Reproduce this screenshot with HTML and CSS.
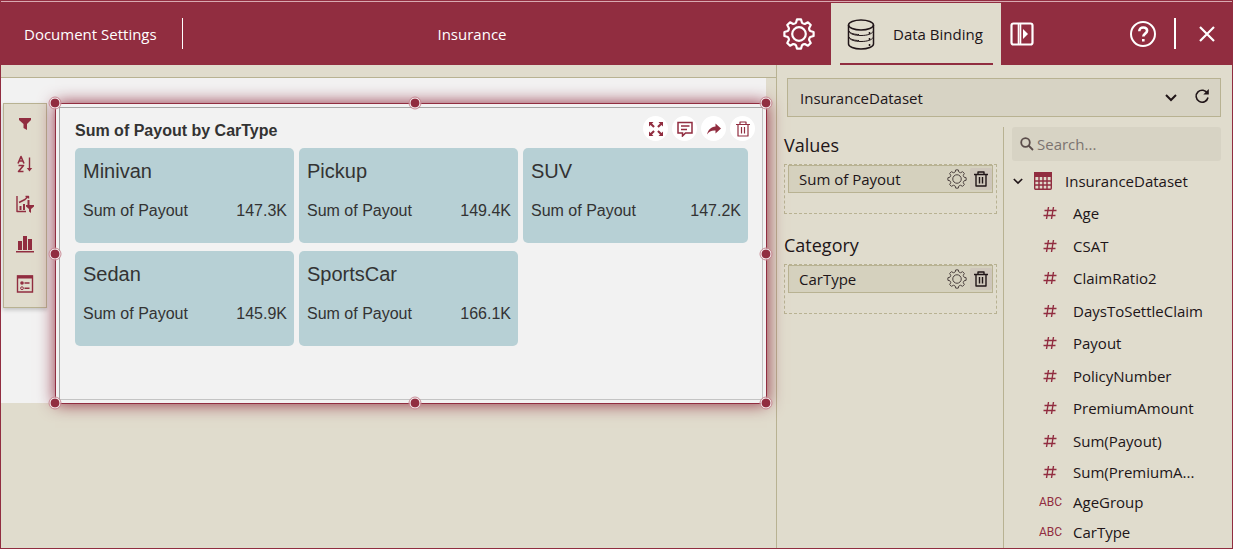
FILE: index.html
```html
<!DOCTYPE html>
<html lang="en">
<head>
<meta charset="utf-8">
<title>Insurance</title>
<link rel="stylesheet" href="styles.css">
</head>
<body>
<svg class="sprite" aria-hidden="true">
  <symbol id="gear" viewBox="-16 -16 32 32">
    <path d="M-3-11.2-2-14.6H2L3-11.2Q4.2-10 5.8-10.04L8.91-11.74 11.74-8.91 10.04-5.8Q10-4.2 11.2-3L14.6-2V2L11.2 3Q10 4.2 10.04 5.8L11.74 8.91 8.91 11.74 5.8 10.04Q4.2 10 3 11.2L2 14.6H-2L-3 11.2Q-4.2 10-5.8 10.04L-8.91 11.74-11.74 8.91-10.04 5.8Q-10 4.2-11.2 3L-14.6 2V-2L-11.2-3Q-10-4.2-10.04-5.8L-11.74-8.91-8.91-11.74-5.8-10.04Q-4.2-10-3-11.2Z"/>
    <circle r="6.8"/>
  </symbol>
  <symbol id="trash" viewBox="0 0 16 16">
    <path d="M1 3.5h14M5 3.500V1h6v2.500M3 3.500V15h10V3.500M6.500 6v6.500M9.500 6v6.500"/>
  </symbol>
  <symbol id="hash" viewBox="0 0 14 14">
    <path d="M5.500 1 3.500 13M10.500 1 8.500 13M1.500 4.500h12M.5 9.500h12"/>
  </symbol>
</svg>
<div class="app">
  <header class="topbar">
    <button class="doc-settings">Document Settings</button>
    <h1 class="doc-title">Insurance</h1>
    <button class="icon-btn properties" aria-label="Properties"><svg class="line i32" stroke-width="2.2"><use href="#gear"/></svg></button>
    <button class="tab">
      <svg class="line" width="28" height="31" viewBox="0 0 28 31" stroke-width="1.5">
        <ellipse cx="14" cy="6" rx="12.500" ry="5"/>
        <path d="M1.500 6v19c0 2.800 5.600 5 12.500 5s12.500-2.200 12.500-5V6"/>
        <path stroke-width="1" d="M2 12.500c1 2.500 6 4 12 4s11-1.500 12-4M2 18.500c1 2.500 6 4 12 4s11-1.500 12-4M2 12c1 2.500 6 3.500 10 3.500M2 18c1 2.500 6 3.500 10 3.500"/>
        <path d="M22.500 13v2M22.500 19v2M22.500 25v2"/>
      </svg>
      <span>Data Binding</span>
    </button>
    <button class="icon-btn collapse" aria-label="Toggle panel">
      <svg width="24" height="24" viewBox="0 0 24 24" fill="none" stroke="currentColor"><rect x="1.500" y="1.500" width="21" height="21" rx="2" stroke-width="2.200"/><path stroke-width="1.600" d="M8.500 2v20M10.500 2v20"/><path fill="currentColor" stroke="none" d="M13 7v10l5-5z"/></svg>
    </button>
    <button class="icon-btn help" aria-label="Help">
      <svg class="line" width="26" height="26" viewBox="0 0 26 26" stroke-width="2"><circle cx="13" cy="13" r="12"/><path stroke-width="2.600" d="M9.300 10.200C9.300 7.800 11 6.500 13.200 6.500s3.900 1.300 3.900 3.300c0 2.800-3.800 2.900-3.800 5.700M13.300 18v2.500"/></svg>
    </button>
    <button class="icon-btn close" aria-label="Close">
      <svg width="16" height="16" viewBox="0 0 16 16" fill="none" stroke="currentColor" stroke-width="2.200"><path d="M1 1l14 14M15 1 1 15"/></svg>
    </button>
  </header>

  <div class="workspace">
    <main class="canvas">
      <div class="ruler"></div>
      <div class="sheet">
        <div class="side-tools" role="toolbar" aria-label="Widget tools">
          <button aria-label="Filter"><svg class="i18" viewBox="0 0 18 18"><path fill="currentColor" d="M3 3h12v2l-4 4v6l-3.500-2V9L3 5z"/></svg></button>
          <button aria-label="Sort"><svg class="i18 line" viewBox="0 0 18 18" stroke-width="1.600"><path d="M2 8.500 5 1.500l3 7M3 6h4M2.500 10.500h5L2.500 16.500h5"/><path stroke-width="1.400" d="M13.500 2.500v12"/><path fill="currentColor" stroke="none" d="M10.800 13h5.400l-2.700 3.500z"/></svg></button>
          <button aria-label="Rank"><svg class="i18 line" viewBox="0 0 18 18" stroke-width="1.400"><path d="M1 1v15.500h9M3 7.500l4-2 2-1 3-3M9.500 1.500h3v2"/><path stroke-width="2" d="M4.500 11v4M8 9v6M12.500 5v5"/><path fill="currentColor" stroke="none" d="M10 10h8v1.500l-3 2.500v4l-2-1.500V14l-3-2.500z"/></svg></button>
          <button aria-label="Chart type"><svg class="i18" viewBox="0 0 18 18" fill="currentColor"><path d="M2 6h4v9H2zM7 1h4v14H7zM12 4h4v11h-4zM0 16h18v1.500H0z"/></svg></button>
          <button aria-label="Legend"><svg class="i18" viewBox="0 0 18 18"><path fill="none" stroke="currentColor" stroke-width="1.400" d="M1.500 1h15v16h-15z"/><path fill="currentColor" d="M1 .5h16v3H1zM8.500 7.200h5v1.500h-5zM8.500 12.500h5V14h-5z"/><circle cx="6" cy="8" r="1.800" fill="currentColor"/><circle cx="6" cy="13.200" r="1.400" fill="none" stroke="currentColor"/></svg></button>
        </div>
        <section class="widget">
          <i class="grip top start"></i><i class="grip top mid"></i><i class="grip top end"></i>
          <i class="grip center start"></i><i class="grip center end"></i>
          <i class="grip bottom start"></i><i class="grip bottom mid"></i><i class="grip bottom end"></i>
          <div class="widget-body">
            <div class="widget-head">
              <h2>Sum of Payout by CarType</h2>
              <div class="actions">
                <button aria-label="Maximize"><svg class="i16" viewBox="0 0 16 16" fill="currentColor"><path d="M1 1h4.500L4 2.500l2.800 2.800L5.300 6.800 2.500 4 1 5.500zM15 1v4.500L13.500 4l-2.800 2.800-1.500-1.500L12 2.500 10.500 1zM1 15v-4.500L2.500 12l2.800-2.800 1.500 1.500L4 13.500 5.500 15zM15 15h-4.500l1.500-1.500-2.800-2.800 1.500-1.500 2.800 2.800 1.500-1.500z"/></svg></button>
                <button aria-label="Comments"><svg class="i16" viewBox="0 0 16 16" fill="none" stroke="currentColor" stroke-width="1.500"><path d="M1 1.500h14v10.500H8.500l-3 3V12H1zM4 5h8.500M4 8.500h6"/></svg></button>
                <button aria-label="Share"><svg class="i16" viewBox="0 0 16 16"><path fill="currentColor" d="M9.500 2.500 15 7.500l-5.500 5V9.500C5.500 9.200 3 10.500 1 13.500 2 9 5 6 9.500 5.500z"/></svg></button>
                <button aria-label="Delete"><svg class="i16 line" stroke-width="1.200"><use href="#trash"/></svg></button>
              </div>
            </div>
            <div class="tiles">
              <article class="tile"><h3>Minivan</h3><p><span>Sum of Payout</span><span>147.3K</span></p></article>
              <article class="tile"><h3>Pickup</h3><p><span>Sum of Payout</span><span>149.4K</span></p></article>
              <article class="tile"><h3>SUV</h3><p><span>Sum of Payout</span><span>147.2K</span></p></article>
              <article class="tile"><h3>Sedan</h3><p><span>Sum of Payout</span><span>145.9K</span></p></article>
              <article class="tile"><h3>SportsCar</h3><p><span>Sum of Payout</span><span>166.1K</span></p></article>
            </div>
          </div>
        </section>
      </div>
    </main>

    <aside class="panel">
      <div class="dataset-box">
        <select aria-label="Dataset"><option>InsuranceDataset</option></select>
        <svg class="chev" width="12" height="8" viewBox="0 0 12 8"><path d="M1 1l5 5 5-5"/></svg>
        <button aria-label="Refresh"><svg class="i16" viewBox="0 0 16 16"><path fill="none" stroke="currentColor" stroke-width="1.600" d="M13.500 5.500A6 6 0 1 0 14 9.500"/><path fill="currentColor" d="M14.800 1v5.500H9.300z"/></svg></button>
      </div>
      <div class="binding">
        <div class="slots">
          <section class="slot">
            <h2>Values</h2>
            <div class="zone">
              <div class="chip"><span>Sum of Payout</span>
                <button aria-label="Field settings"><svg class="line i20" stroke-width="1.600"><use href="#gear"/></svg></button>
                <button class="remove" aria-label="Remove field"><svg class="line i16" stroke-width="1.400"><use href="#trash"/></svg></button>
              </div>
            </div>
          </section>
          <section class="slot">
            <h2>Category</h2>
            <div class="zone">
              <div class="chip"><span>CarType</span>
                <button aria-label="Field settings"><svg class="line i20" stroke-width="1.600"><use href="#gear"/></svg></button>
                <button class="remove" aria-label="Remove field"><svg class="line i16" stroke-width="1.400"><use href="#trash"/></svg></button>
              </div>
            </div>
          </section>
        </div>
        <div class="fields">
          <label class="search">
            <svg width="14" height="14" viewBox="0 0 14 14" fill="none" stroke="currentColor" stroke-width="1.800"><circle cx="5.500" cy="5.500" r="4.300"/><path d="M8.500 8.500 13 13"/></svg>
            <input type="text" placeholder="Search..." aria-label="Search fields">
          </label>
          <button class="dataset-row">
            <svg class="chev" width="10" height="7" viewBox="0 0 12 8"><path d="M1 1l5 5 5-5"/></svg>
            <svg class="table-icon" width="18" height="18" viewBox="0 0 18 18"><rect x="0.700" y="0.700" width="16.600" height="16.600" rx="1" fill="none" stroke="currentColor" stroke-width="1.400"/><path fill="currentColor" d="M0 0h18v5H0z"/><path fill="none" stroke="currentColor" stroke-width="1.400" d="M1 9h16M1 13h16M5 5v12M9 5v12M13 5v12"/></svg>
            <span>InsuranceDataset</span>
          </button>
          <ul class="field-list">
            <li><svg class="hash"><use href="#hash"/></svg><span>Age</span></li>
            <li><svg class="hash"><use href="#hash"/></svg><span>CSAT</span></li>
            <li><svg class="hash"><use href="#hash"/></svg><span>ClaimRatio2</span></li>
            <li><svg class="hash"><use href="#hash"/></svg><span>DaysToSettleClaim</span></li>
            <li><svg class="hash"><use href="#hash"/></svg><span>Payout</span></li>
            <li><svg class="hash"><use href="#hash"/></svg><span>PolicyNumber</span></li>
            <li><svg class="hash"><use href="#hash"/></svg><span>PremiumAmount</span></li>
            <li><svg class="hash"><use href="#hash"/></svg><span>Sum(Payout)</span></li>
            <li><svg class="hash"><use href="#hash"/></svg><span>Sum(PremiumA...</span></li>
            <li><b class="abc">ABC</b><span>AgeGroup</span></li>
            <li><b class="abc">ABC</b><span>CarType</span></li>
          </ul>
        </div>
      </div>
    </aside>
  </div>
</div>
</body>
</html>
```

FILE: styles.css
```css
:root {
  --brand: #912d40;
  --sand: #e0dccd;
  --sand-dark: #d7d3c4;
  --line: #b8b292;
  --ink: #201518;
}
* { box-sizing: border-box; }
body {
  margin: 0;
  font: 15px/20px "Open Sans", sans-serif;
  color: var(--ink);
  background: var(--sand);
}
h1, h2, h3, p, ul { margin: 0; padding: 0; font-weight: 400; }
button, select, input {
  font: inherit;
  color: inherit;
  background: none;
  border: 0;
  margin: 0;
  padding: 0;
}
svg { flex: none; display: block; }
.sprite { position: absolute; width: 0; height: 0; }
.line { fill: none; stroke: currentColor; stroke-linejoin: round; }
.i16 { width: 16px; height: 16px; }
.i18 { width: 18px; height: 18px; }
.i20 { width: 20px; height: 20px; }
.i32 { width: 32px; height: 32px; }
.chev { fill: none; stroke: var(--ink); stroke-width: 2; }

.app {
  min-height: 100vh;
  display: flex;
  flex-direction: column;
  border: 1px solid var(--brand);
}

/* Top bar */
.topbar {
  display: flex;
  align-items: center;
  height: 64px;
  color: #fff;
  background: var(--brand);
  border-top: 1px solid #d9a9b1;
}
.doc-settings {
  width: 182px;
  height: 31px;
  padding-left: 23px;
  text-align: left;
  border-right: 1px solid #fff;
}
.doc-title { flex: 1; padding-right: 6px; text-align: center; font-size: 15px; }
.icon-btn { display: flex; align-items: center; justify-content: center; height: 31px; }
.properties { width: 64px; }
.tab {
  position: relative;
  align-self: stretch;
  display: flex;
  align-items: center;
  gap: 18px;
  width: 170px;
  margin-top: 1px;
  padding-left: 16px;
  color: var(--ink);
  background: var(--sand);
}
.tab::after {
  content: "";
  position: absolute;
  left: 9px;
  right: 8px;
  bottom: 0;
  height: 2px;
  background: var(--brand);
}
.collapse { width: 42px; }
.help { width: 64px; margin-left: 69px; border-right: 2px solid #fff; }
.close { width: 56px; padding-left: 5px; }

/* Canvas */
.workspace { flex: 1; display: flex; }
.canvas { flex: 1; min-width: 0; }
.ruler { height: 13px; border-bottom: 1px solid var(--line); }
.sheet {
  display: flex;
  align-items: flex-start;
  gap: 8px;
  margin-right: 10px;
  padding: 25px 0 0 2px;
  background: #f2f2f2;
}
.side-tools {
  display: flex;
  flex-direction: column;
  width: 44px;
  padding-bottom: 3px;
  color: var(--brand);
  background: var(--sand);
  border: 1px solid var(--line);
  box-shadow: 0 2px 4px #0003;
}
.side-tools button { display: flex; align-items: center; justify-content: center; height: 40px; }
.widget {
  position: relative;
  flex: 1;
  margin: 0 -1px -1px 0;
  padding: 3px;
  background: #f2f2f2;
  border: 1px solid var(--brand);
  box-shadow: 0 0 16px var(--brand);
}
.widget-body {
  padding: 8px 14px 53px 15px;
  font-family: "Liberation Sans", sans-serif;
  color: #333;
  border: 1px solid #c4c4c4;
  border-top-color: #a5a5a5;
  border-left-color: #a5a5a5;
}
.grip {
  position: absolute;
  width: 11px;
  height: 11px;
  border: 1px solid #fff;
  border-radius: 50%;
  background: var(--brand);
  outline: 1px solid #c98b96;
  transform: translate(-50%, -50%);
}
.start { left: -1px; }
.mid { left: 359px; }
.end { left: 100%; }
.top { top: -1px; }
.center { top: 50%; }
.bottom { top: 100%; }
.widget-head { display: flex; justify-content: space-between; align-items: flex-start; height: 32px; }
.widget-head h2 { font-size: 16px; font-weight: 700; padding-top: 5px; }
.actions { display: flex; gap: 4px; margin-right: -7px; }
.actions button {
  display: flex;
  align-items: center;
  justify-content: center;
  width: 25px;
  height: 25px;
  border-radius: 50%;
  color: var(--brand);
  background: #fff;
}
.tiles { display: grid; grid-template-columns: 219fr 219fr 225fr; gap: 8px 5px; }
.tile { height: 95px; padding: 10px 7px 0 8px; border-radius: 5px; background: #b7d0d5; }
.tile h3 { font-size: 20px; line-height: 26px; }
.tile p { display: flex; justify-content: space-between; margin-top: 17px; font-size: 16px; }

/* Data binding panel */
.panel { display: flex; flex-direction: column; width: 456px; border-left: 1px solid var(--line); }
.dataset-box {
  display: flex;
  align-items: center;
  height: 39px;
  margin: 13px 11px 0 10px;
  padding-right: 10px;
  background: var(--sand-dark);
  border: 1px solid var(--line);
}
.dataset-box select { flex: 1; height: 37px; padding-left: 12px; appearance: none; }
.dataset-box button { margin: 0 0 4px 17px; }
.binding { flex: 1; display: flex; margin-top: 10px; }
.slots { width: 227px; padding: 5px 6px 0 7px; border-right: 1px solid var(--line); }
.slot { margin-bottom: 18px; }
.slot h2 { font-size: 18px; line-height: 26px; margin-bottom: 6px; }
.zone { height: 50px; padding: 0 3px; border: 1px dashed var(--line); }
.chip {
  display: flex;
  align-items: center;
  height: 28px;
  padding-left: 10px;
  background: #d5d1be;
  border: 1px solid var(--line);
}
.chip span { flex: 1; }
.chip button { display: flex; align-items: center; justify-content: center; height: 22px; color: #4d4340; }
.chip .remove { width: 22px; margin-left: 3px; border-radius: 2px; color: var(--ink); background: #cec6bb; }

.fields { flex: 1; min-width: 0; padding: 0 11px 0 8px; }
.search {
  display: flex;
  align-items: center;
  gap: 3px;
  height: 34px;
  padding-left: 8px;
  border-radius: 3px;
  color: #5b4d4b;
  background: var(--sand-dark);
}
.search input { flex: 1; min-width: 0; height: 34px; outline: 0; }
.search input::placeholder { color: #7c7370; opacity: 1; }
.dataset-row { display: flex; align-items: center; height: 36px; padding: 4px 0 0 1px; }
.table-icon { margin: 0 13px 0 11px; color: var(--brand); }
.field-list { list-style: none; }
.field-list li { display: flex; align-items: center; height: 32px; }
.field-list li:nth-child(even) { height: 33px; }
.field-list li:nth-child(n+9) { height: 30px; }
.hash { width: 14px; height: 14px; margin: 0 16px 0 31px; fill: none; stroke: var(--brand); stroke-width: 1.4; }
.abc { width: 34px; margin-left: 27px; font: 12px/20px Roboto, sans-serif; color: var(--brand); }
```
